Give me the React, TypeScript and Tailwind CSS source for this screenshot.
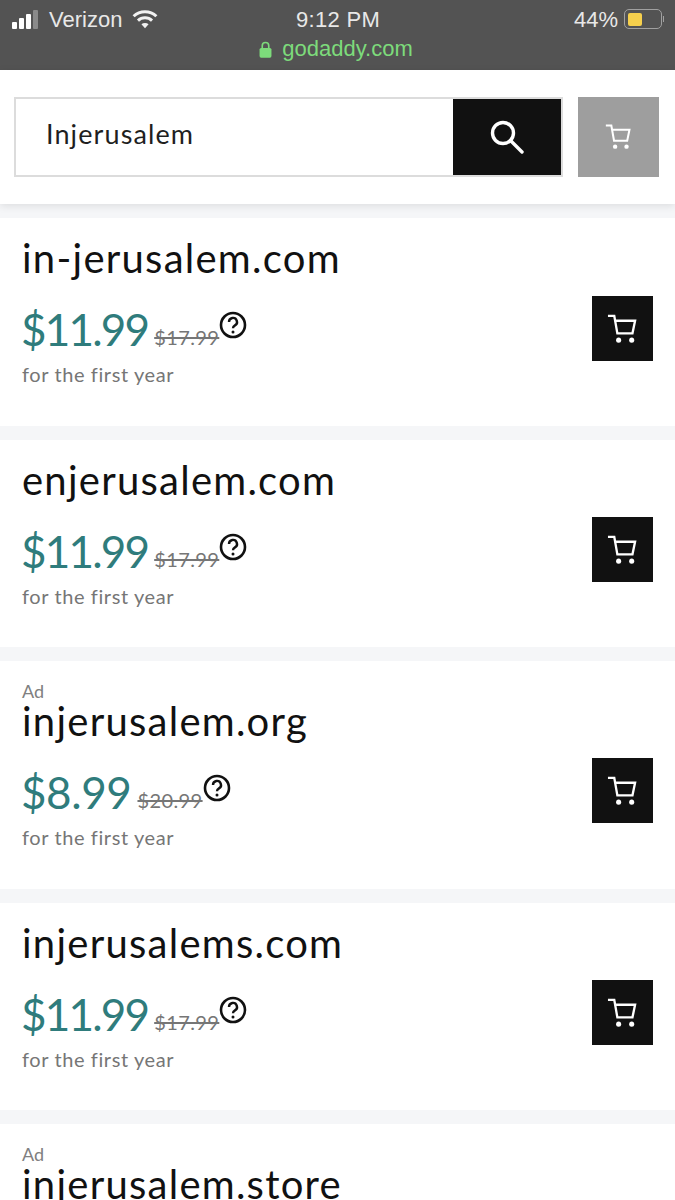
type Domain = {
  name: string;
  price: string;
  oldPrice: string;
  ad?: boolean;
};

const domains: Domain[] = [
  { name: "in-jerusalem.com", price: "$11.99", oldPrice: "$17.99" },
  { name: "enjerusalem.com", price: "$11.99", oldPrice: "$17.99" },
  { name: "injerusalem.org", price: "$8.99", oldPrice: "$20.99", ad: true },
  { name: "injerusalems.com", price: "$11.99", oldPrice: "$17.99" },
  { name: "injerusalem.store", price: "$8.99", oldPrice: "$20.99", ad: true },
];

function CartIcon({ className }: { className: string }) {
  return (
    <svg viewBox="0 0 32 32" fill="none" stroke="currentColor" strokeWidth="2.4" className={className}>
      <path d="M1 3h6.5l3.2 18h15.6l2.7-13H8.5" />
      <circle cx="12" cy="28" r="2.6" fill="currentColor" stroke="none" />
      <circle cx="25.5" cy="28" r="2.6" fill="currentColor" stroke="none" />
    </svg>
  );
}

function StatusBar() {
  return (
    <div className="h-[70px] bg-[#535353] pr-[11px] pl-[12px] font-['Liberation_Sans',sans-serif] text-[#e8e8e8]">
      <div className="grid h-[38px] grid-cols-[1fr_auto_1fr] items-center">
        <div className="flex items-center">
          <div className="flex items-end gap-[2px]">
            <div className="h-[7px] w-[5px] rounded-[1px] bg-white" />
            <div className="h-[11px] w-[5px] rounded-[1px] bg-white" />
            <div className="h-[15px] w-[5px] rounded-[1px] bg-white" />
            <div className="h-[19px] w-[5px] rounded-[1px] bg-[#8a8a8a]" />
          </div>
          <span className="ml-[11px] text-[22px]">Verizon</span>
          <svg viewBox="0 0 24 18" className="ml-[10px] h-[20px] w-[26px]" fill="none" stroke="#f2f2f2" strokeWidth="2.8">
            <path d="M1.5 6.5a15 15 0 0 1 21 0" />
            <path d="M5.5 10.5a9.5 9.5 0 0 1 13 0" />
            <path d="M12 17.5l-3.3-3.6a4.8 4.8 0 0 1 6.6 0z" fill="#f2f2f2" stroke="none" />
          </svg>
        </div>
        <div className="text-center text-[22px] tracking-[0.3px]">9:12 PM</div>
        <div className="flex items-center justify-end">
          <span className="text-[22px]">44%</span>
          <div className="ml-[6px] flex h-[20px] w-[38px] items-center rounded-[5px] border border-[#a0a0a0] p-[3px]">
            <div className="h-[13px] w-[14px] rounded-[2px] bg-[#f6d04d]" />
          </div>
          <div className="ml-[1px] h-[6px] w-[1px] bg-[#a0a0a0]" />
        </div>
      </div>
      <div className="flex items-center justify-center pr-[4px] text-[22px] leading-[22px] text-[#7ddb7b]">
        <svg viewBox="0 0 12 16" className="mr-[10px] h-[19px] w-[13px]">
          <path d="M3 7V4.5a3 3 0 0 1 6 0V7" fill="none" stroke="#7ddb7b" strokeWidth="1.5" />
          <rect x="0.5" y="6.5" width="11" height="9" rx="1.5" fill="#7ddb7b" />
        </svg>
        godaddy.com
      </div>
    </div>
  );
}

function SearchHeader() {
  return (
    <div className="relative z-10 flex h-[134px] bg-white pt-[27px] pl-[14px] shadow-[0_2px_8px_rgba(0,0,0,0.1)]">
      <div className="flex h-[80px] w-[549px] border-2 border-[#dcdcdc]">
        <div className="flex-1 pl-[30px] text-[27px] leading-[70px] tracking-[1.1px] text-[#1f1f1f]">Injerusalem</div>
        <div className="flex w-[108px] items-center justify-center bg-[#111111]">
          <svg viewBox="0 0 34 34" className="h-[34px] w-[34px]" fill="none" stroke="white" strokeWidth="3.4">
            <circle cx="13" cy="13" r="10.5" />
            <path d="M20.5 20.5L32 32" strokeLinecap="round" />
          </svg>
        </div>
      </div>
      <div className="ml-[15px] flex h-[80px] w-[81px] items-center justify-center bg-[#9e9e9e] text-white">
        <CartIcon className="mb-[2px] h-[27px] w-[27px]" />
      </div>
    </div>
  );
}

function DomainCard({ domain }: { domain: Domain }) {
  return (
    <div className="relative mt-[14px] bg-white pl-[22px]">
      {domain.ad && <div className="-mb-[1px] pt-[20px] text-[18px] leading-[20px] text-[#808080]">Ad</div>}
      <div className={domain.ad ? "text-[40px] leading-[42px] tracking-[1.25px] text-[#111111]" : "pt-[19px] text-[40px] leading-[42px] tracking-[1.25px] text-[#111111]"}>
        {domain.name}
      </div>
      <div className="mt-[23px] flex h-[56px] items-start">
        <span className={domain.ad ? "-mt-[1px] -ml-[1px] text-[44px] leading-[56px] tracking-[-0.4px] text-[#2f7c7c]" : "-mt-[1px] -ml-[1px] text-[44px] leading-[56px] tracking-[-1.8px] text-[#2f7c7c]"}>{domain.price}</span>
        <span className="mt-[23px] ml-[6px] text-[20px] leading-[24px] tracking-[0.4px] text-[#767676] line-through">{domain.oldPrice}</span>
        <svg viewBox="0 0 28 28" className="mt-[9px] h-[28px] w-[28px]" fill="none" stroke="#111111" strokeWidth="2.6">
          <circle cx="14" cy="14" r="12" />
          <path d="M10 11a4 4 0 1 1 6 3.4c-1.4.8-2 1.4-2 2.8" strokeWidth="2.4" />
          <circle cx="14" cy="21" r="1.5" fill="#111111" stroke="none" />
        </svg>
      </div>
      <div className="mt-[4px] pb-[39.5px] text-[20px] leading-[24px] tracking-[0.6px] text-[#767676]">for the first year</div>
      <div className={domain.ad ? "absolute top-[97px] right-[22px] flex h-[65px] w-[61px] items-center justify-center bg-[#111111] text-white" : "absolute top-[77.5px] right-[22px] flex h-[65px] w-[61px] items-center justify-center bg-[#111111] text-white"}>
        <CartIcon className="h-[31px] w-[31px]" />
      </div>
    </div>
  );
}

export default function App() {
  return (
    <div className="h-[1200px] w-[675px] overflow-hidden bg-[#f5f6f8] font-['Lato',sans-serif]">
      <StatusBar />
      <SearchHeader />
      {domains.map((domain) => (
        <DomainCard key={domain.name} domain={domain} />
      ))}
    </div>
  );
}
